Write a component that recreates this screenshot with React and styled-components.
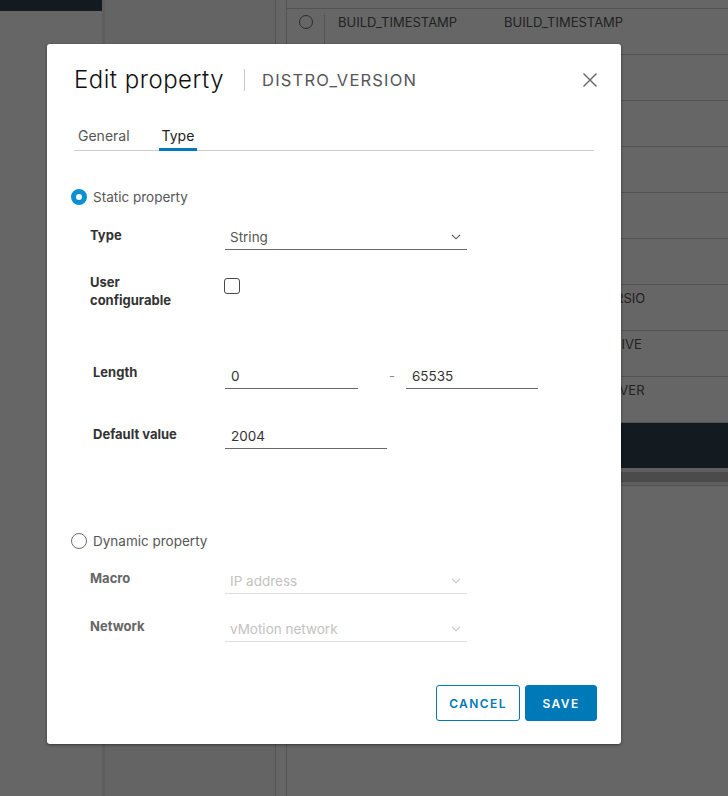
import React from "react";
import styled, { createGlobalStyle } from "styled-components";

const GlobalStyle = createGlobalStyle`
  html, body { margin: 0; padding: 0; }
  body {
    font-family: Inter, "Noto Sans", sans-serif;
    width: 728px;
    height: 796px;
    overflow: hidden;
    background: #fff;
  }
  * { box-sizing: border-box; }
`;

/* ---------- background page ---------- */
const Page = styled.div`
  position: relative;
  display: flex;
  width: 728px;
  height: 796px;
  overflow: hidden;
  background: #fff;
`;

const LeftNav = styled.div`
  width: 102px;
  flex-shrink: 0;
  display: flex;
  flex-direction: column;
`;

const NavTopBar = styled.div`
  height: 11px;
  background: #304152;
`;

const SubNav = styled.div`
  width: 174px;
  flex-shrink: 0;
  background: #fafafa;
  border-left: 3px solid #ececec;
  border-right: 1px solid #cfcfcf;
`;

const Gutter = styled.div`
  width: 10px;
  flex-shrink: 0;
`;

const TableArea = styled.div`
  flex: 1;
  display: flex;
  flex-direction: column;
  border-left: 1px solid #cfcfcf;
`;

const HeaderRow = styled.div`
  height: 9px;
  border-bottom: 1px solid #cfcfcf;
`;

const Row = styled.div`
  height: 46px;
  display: flex;
  align-items: flex-start;
  border-bottom: 1px solid #cfcfcf;
  color: #565656;
  font-size: 13px;
  line-height: 18px;
  white-space: nowrap;
`;

const RadioCell = styled.div`
  width: 37px;
  flex-shrink: 0;
  display: flex;
  justify-content: center;
  padding-top: 6px;
`;

const SmallRadio = styled.span`
  width: 14px;
  height: 14px;
  border-radius: 50%;
  border: 1px solid #707070;
`;

const NameCell = styled.div`
  width: 180px;
  flex-shrink: 0;
  margin-top: 5px;
  height: 34px;
  padding: 0 0 0 13px;
  border-left: 1px solid ${(p) => (p.$divider ? "#cfcfcf" : "transparent")};
`;

const NameText = styled.div`
  margin-top: -1px;
`;

const ValueCell = styled.div`
  width: 141px;
  flex-shrink: 0;
  overflow: hidden;
  padding-top: 4px;
`;

const TableFooter = styled.div`
  height: 45px;
  background: #304152;
`;

const ScrollTrack = styled.div`
  height: 18px;
  background: #ececec;
  padding-top: 4px;
  border-bottom: 1px solid #cfcfcf;
`;

const ScrollThumb = styled.div`
  height: 10px;
  background: #bcbcbc;
`;

/* ---------- overlay + dialog ---------- */
const Overlay = styled.div`
  position: absolute;
  inset: 0;
  background: rgba(0, 0, 0, 0.6);
  display: flex;
  align-items: flex-start;
  padding: 44px 0 0 47px;
`;

const Dialog = styled.div`
  width: 574px;
  height: 700px;
  background: #fff;
  border-radius: 3px;
  box-shadow: 0 1px 3px rgba(0, 0, 0, 0.45);
  padding: 0 27px 23px 27px;
  display: flex;
  flex-direction: column;
  color: #565656;
`;

const Header = styled.div`
  display: flex;
  align-items: center;
  margin-top: 22px;
  height: 28px;
`;

const Title = styled.h2`
  margin: 0;
  font-size: 24px;
  line-height: 28px;
  font-weight: 300;
  color: #111;
  letter-spacing: 0.5px;
`;

const TitleDivider = styled.span`
  width: 1px;
  height: 22px;
  background: #c8c8c8;
  margin: 0 17px 0 20px;
`;

const SubTitle = styled.span`
  font-size: 16.5px;
  line-height: 20px;
  letter-spacing: 1.2px;
  color: #565656;
  flex: 1;
`;

const CloseButton = styled.button`
  border: 0;
  background: none;
  padding: 0;
  margin-right: -4px;
  width: 16px;
  height: 16px;
  display: flex;
  cursor: pointer;
`;

const Tabs = styled.div`
  display: flex;
  gap: 26px;
  margin-top: 28px;
  border-bottom: 1px solid #cccccc;
  padding-left: 1px;
`;

const Tab = styled.div`
  padding: 5px 3px 6px;
  font-size: 14px;
  line-height: 18px;
  color: ${(p) => (p.$active ? "#222" : "#565656")};
  box-shadow: ${(p) => (p.$active ? "inset 0 -3px 0 #0079b8" : "none")};
  margin-bottom: -1px;
`;

const RadioRow = styled.label`
  display: flex;
  align-items: center;
  gap: 6px;
  margin-left: -3px;
  margin-top: ${(p) => p.$mt}px;
  height: 16px;
  font-size: 13.5px;
  color: #565656;
`;

const RadioDot = styled.span`
  width: 16px;
  height: 16px;
  border-radius: 50%;
  flex-shrink: 0;
  ${(p) =>
    p.$checked
      ? "background: #fff; border: 5px solid #0a8fd3;"
      : "border: 1px solid #6f6f6f;"}
`;

const FieldRow = styled.div`
  display: flex;
  align-items: flex-start;
  margin-top: ${(p) => p.$mt}px;
  padding-left: 16px;
`;

const Label = styled.div`
  width: ${(p) => 135 - (p.$indent || 0)}px;
  margin-left: ${(p) => p.$indent || 0}px;
  flex-shrink: 0;
  font-size: 13px;
  line-height: 18px;
  font-weight: 700;
  color: ${(p) => (p.$muted ? "#666" : "#333")};
  padding-right: 40px;
`;

const Select = styled.div`
  width: 242px;
  height: 24px;
  margin-top: ${(p) => p.$offset || 0}px;
  padding: 2px 6px 0 5px;
  display: flex;
  align-items: flex-start;
  justify-content: space-between;
  font-size: 13.5px;
  line-height: 18px;
  border-bottom: 1px solid ${(p) => (p.$disabled ? "#dedede" : "#6a6a6a")};
  color: ${(p) => (p.$disabled ? "#c2c2c2" : "#565656")};
`;

const Chevron = styled.svg`
  margin-top: 6px;
  flex-shrink: 0;
`;

const Input = styled.div`
  width: ${(p) => p.$w}px;
  height: 24px;
  margin-top: ${(p) => p.$offset || 0}px;
  padding: 2px 6px 0 6px;
  font-size: 13.5px;
  line-height: 18px;
  color: #333;
  border-bottom: 1px solid #6a6a6a;
`;

const Dash = styled.span`
  font-size: 13px;
  line-height: 22px;
  margin-top: 2px;
  color: #888;
  margin-left: 31px;
  margin-right: 12px;
  width: 5px;
`;

const Checkbox = styled.span`
  width: 16px;
  height: 16px;
  margin-top: 5px;
  margin-left: -1px;
  border: 1px solid #4a4a4a;
  border-radius: 3px;
`;

const Footer = styled.div`
  margin-top: auto;
  display: flex;
  justify-content: flex-end;
  gap: 5px;
  margin-right: -3px;
`;

const Button = styled.button`
  height: 36px;
  width: ${(p) => p.$w}px;
  border-radius: 3px;
  border: 1px solid #0079b8;
  background: ${(p) => (p.$primary ? "#0079b8" : "#fff")};
  color: ${(p) => (p.$primary ? "#fff" : "#0079b8")};
  font-family: inherit;
  font-size: 12px;
  font-weight: 600;
  letter-spacing: 1.4px;
  padding: 0;
  cursor: pointer;
`;

const ChevronIcon = () => (
  <Chevron width="10" height="6" viewBox="0 0 10 6">
    <path d="M1 0.8 L5 4.8 L9 0.8" fill="none" stroke="currentColor" strokeWidth="1.1" />
  </Chevron>
);

const rows = [
  { name: "BUILD_TIMESTAMP", value: "BUILD_TIMESTAMP" },
  { name: "", value: "" },
  { name: "", value: "" },
  { name: "", value: "" },
  { name: "", value: "" },
  { name: "", value: "" },
  { name: "", value: "HOST_DISTRO_VERSION" },
  { name: "", value: "ISO_DISTRO_ARCHIVE" },
  { name: "", value: "LOG_INSIGHT_SERVER" },
];

export default function App() {
  return (
    <>
      <GlobalStyle />
      <Page>
        <LeftNav>
          <NavTopBar />
        </LeftNav>
        <SubNav />
        <Gutter />
        <TableArea>
          <HeaderRow />
          {rows.map((r, i) => (
            <Row key={i}>
              <RadioCell>{i === 0 && <SmallRadio />}</RadioCell>
              <NameCell $divider={i === 0}>
                <NameText>{r.name}</NameText>
              </NameCell>
              <ValueCell>{r.value}</ValueCell>
            </Row>
          ))}
          <TableFooter />
          <ScrollTrack>
            <ScrollThumb />
          </ScrollTrack>
        </TableArea>

        <Overlay>
          <Dialog>
            <Header>
              <Title>Edit property</Title>
              <TitleDivider />
              <SubTitle>DISTRO_VERSION</SubTitle>
              <CloseButton aria-label="Close">
                <svg width="16" height="16" viewBox="0 0 16 16">
                  <path d="M1.5 1.5 L14.5 14.5 M14.5 1.5 L1.5 14.5" stroke="#666" strokeWidth="1.4" fill="none" />
                </svg>
              </CloseButton>
            </Header>

            <Tabs>
              <Tab>General</Tab>
              <Tab $active>Type</Tab>
            </Tabs>

            <RadioRow $mt={38}>
              <RadioDot $checked />
              Static property
            </RadioRow>

            <FieldRow $mt={21}>
              <Label>Type</Label>
              <Select>
                String
                <ChevronIcon />
              </Select>
            </FieldRow>

            <FieldRow $mt={23}>
              <Label>User configurable</Label>
              <Checkbox />
            </FieldRow>

            <FieldRow $mt={54}>
              <Label $indent={3}>Length</Label>
              <Input $w={133} $offset={2}>0</Input>
              <Dash>-</Dash>
              <Input $w={132} $offset={2}>65535</Input>
            </FieldRow>

            <FieldRow $mt={36}>
              <Label $indent={3}>Default value</Label>
              <Input $w={162}>2004</Input>
            </FieldRow>

            <RadioRow $mt={84}>
              <RadioDot />
              Dynamic property
            </RadioRow>

            <FieldRow $mt={20}>
              <Label $muted>Macro</Label>
              <Select $disabled $offset={1}>
                IP address
                <ChevronIcon />
              </Select>
            </FieldRow>

            <FieldRow $mt={23}>
              <Label $muted>Network</Label>
              <Select $disabled $offset={1}>
                vMotion network
                <ChevronIcon />
              </Select>
            </FieldRow>

            <Footer>
              <Button $w={84}>CANCEL</Button>
              <Button $w={72} $primary>SAVE</Button>
            </Footer>
          </Dialog>
        </Overlay>
      </Page>
    </>
  );
}
